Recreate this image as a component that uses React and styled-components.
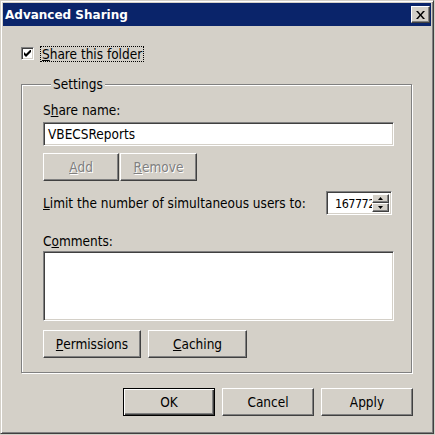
import React from 'react'
import styled, { createGlobalStyle } from 'styled-components'

const GlobalStyle = createGlobalStyle`
  html, body {
    margin: 0;
    padding: 0;
    background: #d4d0c8;
  }
  body {
    font-family: "DejaVu Sans Condensed", "DejaVu Sans", sans-serif;
    font-size: 13.5px;
    color: #000;
  }
  * {
    box-sizing: border-box;
  }
`

const Window = styled.div`
  width: 434px;
  height: 434px;
  display: flex;
  flex-direction: column;
  padding: 2px;
  background: #d4d0c8;
  border: 1px solid;
  border-color: #d4d0c8 #404040 #404040 #d4d0c8;
  box-shadow: inset 1px 1px 0 #fff, inset -1px -1px 0 #808080;
`

const TitleBar = styled.div`
  height: 23px;
  flex: none;
  display: flex;
  align-items: center;
  justify-content: space-between;
  padding: 0 1px 0 2px;
  background: #0a246a;
`

const Title = styled.span`
  font-family: "DejaVu Sans", sans-serif;
  font-weight: bold;
  font-size: 12px;
  color: #fff;
`

const CloseButton = styled.div`
  width: 19px;
  height: 17px;
  display: flex;
  align-items: center;
  justify-content: center;
  background: #d4d0c8;
  border: 1px solid;
  border-color: #fff #404040 #404040 #fff;
  box-shadow: inset -1px -1px 0 #808080;
`

const Client = styled.div`
  flex: 1;
  display: flex;
  flex-direction: column;
  padding: 20px 18px 0 18px;
`

const CheckRow = styled.div`
  display: flex;
  align-items: center;
  height: 15px;
`

const CheckBox = styled.div`
  width: 13px;
  height: 13px;
  display: flex;
  align-items: center;
  justify-content: center;
  background: #fff;
  border: 1px solid;
  border-color: #808080 #fff #fff #808080;
  box-shadow: inset 1px 1px 0 #404040, inset -1px -1px 0 #d4d0c8;
`

const FocusLabel = styled.span`
  margin-left: 7px;
  padding: 0 1px;
  line-height: 14px;
  outline: 1px dotted #000;
`

const Group = styled.fieldset`
  margin: 16px 0 0 0;
  width: 391px;
  padding: 10px 17px 14px 21px;
  min-width: 0;
  border: 1px solid #808080;
  box-shadow: inset 1px 1px 0 #fff, 1px 1px 0 #fff;
  display: flex;
  flex-direction: column;
`

const Legend = styled.legend`
  margin-left: 8px;
  padding: 0 2px;
  line-height: 15px;
  background: #d4d0c8;
`

const Label = styled.div`
  line-height: 16px;
  margin-top: ${p => p.$top || 0}px;
`

const Sunken = styled.div`
  background: #fff;
  border: 1px solid;
  border-color: #808080 #fff #fff #808080;
  box-shadow: inset 1px 1px 0 #404040, inset -1px -1px 0 #d4d0c8;
`

const TextField = styled(Sunken)`
  width: 351px;
  height: ${p => p.$height}px;
  margin-top: ${p => p.$top}px;
  padding: 0 4px;
  display: flex;
  align-items: ${p => (p.$multi ? 'flex-start' : 'center')};
`

const ButtonRow = styled.div`
  display: flex;
  gap: ${p => p.$gap}px;
  margin-top: ${p => p.$top}px;
  justify-content: ${p => (p.$end ? 'flex-end' : 'flex-start')};
`

const Button = styled.div`
  width: ${p => p.$width}px;
  height: 28px;
  display: flex;
  align-items: center;
  justify-content: center;
  background: #d4d0c8;
  border: 1px solid;
  border-color: ${p => (p.$default ? '#000' : '#fff #404040 #404040 #fff')};
  box-shadow: ${p =>
    p.$default
      ? 'inset 1px 1px 0 #fff, inset -1px -1px 0 #404040, inset -2px -2px 0 #808080'
      : 'inset -1px -1px 0 #808080'};
  color: ${p => (p.$disabled ? '#808080' : '#000')};
  text-shadow: ${p => (p.$disabled ? '1px 1px 0 #fff' : 'none')};
`

const LimitRow = styled.div`
  display: flex;
  align-items: center;
  justify-content: space-between;
  margin-top: 10px;
  padding-right: 2px;
`

const Spin = styled(Sunken)`
  width: 66px;
  height: 24px;
  display: flex;
  align-items: stretch;
  padding: 2px;
`

const SpinText = styled.div`
  flex: 1;
  overflow: hidden;
  white-space: nowrap;
  padding-left: 6px;
  line-height: 20px;
  font-size: 12.5px;
  letter-spacing: -0.5px;
`

const SpinButtons = styled.div`
  width: 17px;
  display: flex;
  flex-direction: column;
`

const SpinButton = styled.div`
  flex: 1;
  display: flex;
  align-items: center;
  justify-content: center;
  background: #d4d0c8;
  border: 1px solid;
  border-color: #fff #404040 #404040 #fff;
  box-shadow: inset -1px -1px 0 #808080;
`

const Arrow = ({ up }) => (
  <svg width="5" height="3" viewBox="0 0 5 3">
    <path d={up ? 'M2.5 0 L5 3 L0 3 Z' : 'M0 0 L5 0 L2.5 3 Z'} fill="#000" />
  </svg>
)

export default function App() {
  return (
    <>
      <GlobalStyle />
      <Window>
        <TitleBar>
          <Title>Advanced Sharing</Title>
          <CloseButton>
            <svg width="9" height="8" viewBox="0 0 9 8">
              <path d="M0 0h2l2.5 3 2.5-3h2L5.5 4 9 8H7L4.5 5 2 8H0l3.5-4z" fill="#000" />
            </svg>
          </CloseButton>
        </TitleBar>
        <Client>
          <CheckRow>
            <CheckBox>
              <svg width="7" height="7" viewBox="0 0 7 7">
                <path d="M0 2v3l2 2 5-5V-1L2 4z" fill="#000" />
              </svg>
            </CheckBox>
            <FocusLabel>
              <u>S</u>hare this folder
            </FocusLabel>
          </CheckRow>
          <Group>
            <Legend>Settings</Legend>
            <Label>
              S<u>h</u>are name:
            </Label>
            <TextField $height={24} $top={4}>
              VBECSReports
            </TextField>
            <ButtonRow $gap={1} $top={7}>
              <Button $width={76} $disabled>
                <u>A</u>dd
              </Button>
              <Button $width={77} $disabled>
                <u>R</u>emove
              </Button>
            </ButtonRow>
            <LimitRow>
              <span>
                <u>L</u>imit the number of simultaneous users to:
              </span>
              <Spin>
                <SpinText>16777216</SpinText>
                <SpinButtons>
                  <SpinButton>
                    <Arrow up />
                  </SpinButton>
                  <SpinButton>
                    <Arrow />
                  </SpinButton>
                </SpinButtons>
              </Spin>
            </LimitRow>
            <Label $top={18}>
              C<u>o</u>mments:
            </Label>
            <TextField $height={70} $top={2} $multi />
            <ButtonRow $gap={7} $top={9}>
              <Button $width={98}>
                <u>P</u>ermissions
              </Button>
              <Button $width={99}>
                <u>C</u>aching
              </Button>
            </ButtonRow>
          </Group>
          <ButtonRow $gap={7} $top={15} $end>
            <Button $width={92} $default>
              OK
            </Button>
            <Button $width={92}>Cancel</Button>
            <Button $width={92}>Apply</Button>
          </ButtonRow>
        </Client>
      </Window>
    </>
  )
}
